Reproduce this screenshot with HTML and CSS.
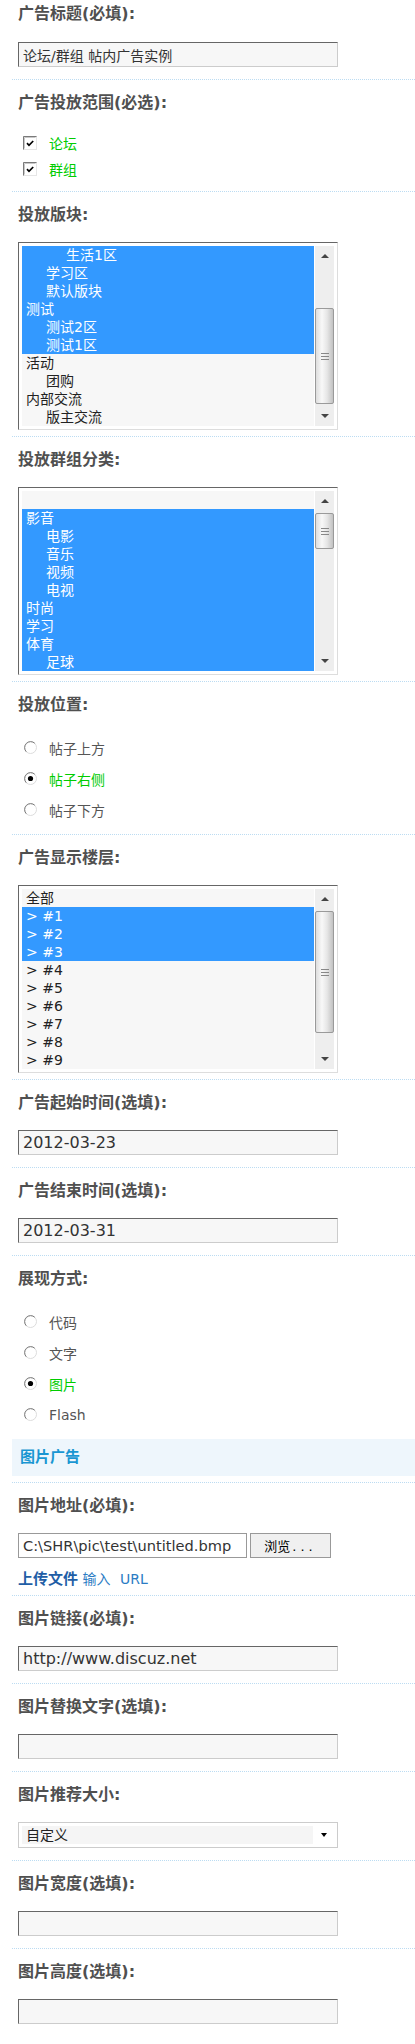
FILE: index.html
```html
<!DOCTYPE html>
<html lang="zh">
<head>
    <meta charset="UTF-8">
    <title>编辑广告</title>
    <link rel="stylesheet" href="styles.css">
</head>
<body>
    <form class="form">
        <div class="row">
            <div class="label">广告标题(必填):</div>
            <input class="text cjk" type="text" value="论坛/群组 帖内广告实例">
        </div>

        <div class="row listrow">
            <div class="label">广告投放范围(必选):</div>
            <ul class="choices checks">
                <li class="on">
                    <svg class="box" width="14" height="14" viewBox="0 0 14 14"><rect x="0" y="0" width="14" height="14" fill="#e6e6e6"/><path d="M0.5 13.5V0.5H13.5" fill="none" stroke="#7a7a7a"/><rect x="1" y="1" width="12" height="12" fill="#fff"/><path d="M1.5 12.5V1.5H12.5" fill="none" stroke="#c8c8c8"/><path d="M4 7.2L6 9.3L10.2 5" fill="none" stroke="#000" stroke-width="1.7"/></svg>
                    论坛
                </li>
                <li class="on">
                    <svg class="box" width="14" height="14" viewBox="0 0 14 14"><rect x="0" y="0" width="14" height="14" fill="#e6e6e6"/><path d="M0.5 13.5V0.5H13.5" fill="none" stroke="#7a7a7a"/><rect x="1" y="1" width="12" height="12" fill="#fff"/><path d="M1.5 12.5V1.5H12.5" fill="none" stroke="#c8c8c8"/><path d="M4 7.2L6 9.3L10.2 5" fill="none" stroke="#000" stroke-width="1.7"/></svg>
                    群组
                </li>
            </ul>
        </div>

        <div class="row boxrow">
            <div class="label">投放版块:</div>
            <div class="listbox">
                <ul class="options">
                    <li class="sel in2">生活1区</li>
                    <li class="sel in1">学习区</li>
                    <li class="sel in1">默认版块</li>
                    <li class="sel">测试</li>
                    <li class="sel in1">测试2区</li>
                    <li class="sel in1">测试1区</li>
                    <li>活动</li>
                    <li class="in1">团购</li>
                    <li>内部交流</li>
                    <li class="in1">版主交流</li>
                </ul>
                <div class="sb">
                    <span class="sb-btn"><i class="arr-up"></i></span>
                    <span class="sb-track"><span class="thumb thumb-a"><i class="grip"></i></span></span>
                    <span class="sb-btn"><i class="arr-down"></i></span>
                </div>
            </div>
        </div>

        <div class="row boxrow">
            <div class="label">投放群组分类:</div>
            <div class="listbox">
                <ul class="options">
                    <li>&nbsp;</li>
                    <li class="sel">影音</li>
                    <li class="sel in1">电影</li>
                    <li class="sel in1">音乐</li>
                    <li class="sel in1">视频</li>
                    <li class="sel in1">电视</li>
                    <li class="sel">时尚</li>
                    <li class="sel">学习</li>
                    <li class="sel">体育</li>
                    <li class="sel in1">足球</li>
                </ul>
                <div class="sb">
                    <span class="sb-btn"><i class="arr-up"></i></span>
                    <span class="sb-track"><span class="thumb thumb-b"><i class="grip"></i></span></span>
                    <span class="sb-btn"><i class="arr-down"></i></span>
                </div>
            </div>
        </div>

        <div class="row listrow">
            <div class="label">投放位置:</div>
            <ul class="choices radios">
                <li>
                    <svg class="radio" width="13" height="13" viewBox="0 0 13 13"><circle cx="6.5" cy="6.5" r="6" fill="#fff" stroke="#dcdcdc"/><path d="M2.26 10.74A6 6 0 0 1 10.74 2.26" fill="none" stroke="#7a7a7a"/></svg>
                    帖子上方
                </li>
                <li class="on">
                    <svg class="radio" width="13" height="13" viewBox="0 0 13 13"><circle cx="6.5" cy="6.5" r="6" fill="#fff" stroke="#dcdcdc"/><path d="M2.26 10.74A6 6 0 0 1 10.74 2.26" fill="none" stroke="#7a7a7a"/><circle cx="6.5" cy="6.5" r="2.6" fill="#000"/></svg>
                    帖子右侧
                </li>
                <li>
                    <svg class="radio" width="13" height="13" viewBox="0 0 13 13"><circle cx="6.5" cy="6.5" r="6" fill="#fff" stroke="#dcdcdc"/><path d="M2.26 10.74A6 6 0 0 1 10.74 2.26" fill="none" stroke="#7a7a7a"/></svg>
                    帖子下方
                </li>
            </ul>
        </div>

        <div class="row boxrow">
            <div class="label">广告显示楼层:</div>
            <div class="listbox">
                <ul class="options latin">
                    <li>全部</li>
                    <li class="sel">&gt; #1</li>
                    <li class="sel">&gt; #2</li>
                    <li class="sel">&gt; #3</li>
                    <li>&gt; #4</li>
                    <li>&gt; #5</li>
                    <li>&gt; #6</li>
                    <li>&gt; #7</li>
                    <li>&gt; #8</li>
                    <li>&gt; #9</li>
                </ul>
                <div class="sb">
                    <span class="sb-btn"><i class="arr-up"></i></span>
                    <span class="sb-track"><span class="thumb thumb-c"><i class="grip"></i></span></span>
                    <span class="sb-btn"><i class="arr-down"></i></span>
                </div>
            </div>
        </div>

        <div class="row">
            <div class="label">广告起始时间(选填):</div>
            <input class="text" type="text" value="2012-03-23">
        </div>

        <div class="row">
            <div class="label">广告结束时间(选填):</div>
            <input class="text" type="text" value="2012-03-31">
        </div>

        <div class="row listrow">
            <div class="label">展现方式:</div>
            <ul class="choices radios">
                <li>
                    <svg class="radio" width="13" height="13" viewBox="0 0 13 13"><circle cx="6.5" cy="6.5" r="6" fill="#fff" stroke="#dcdcdc"/><path d="M2.26 10.74A6 6 0 0 1 10.74 2.26" fill="none" stroke="#7a7a7a"/></svg>
                    代码
                </li>
                <li>
                    <svg class="radio" width="13" height="13" viewBox="0 0 13 13"><circle cx="6.5" cy="6.5" r="6" fill="#fff" stroke="#dcdcdc"/><path d="M2.26 10.74A6 6 0 0 1 10.74 2.26" fill="none" stroke="#7a7a7a"/></svg>
                    文字
                </li>
                <li class="on">
                    <svg class="radio" width="13" height="13" viewBox="0 0 13 13"><circle cx="6.5" cy="6.5" r="6" fill="#fff" stroke="#dcdcdc"/><path d="M2.26 10.74A6 6 0 0 1 10.74 2.26" fill="none" stroke="#7a7a7a"/><circle cx="6.5" cy="6.5" r="2.6" fill="#000"/></svg>
                    图片
                </li>
                <li>
                    <svg class="radio" width="13" height="13" viewBox="0 0 13 13"><circle cx="6.5" cy="6.5" r="6" fill="#fff" stroke="#dcdcdc"/><path d="M2.26 10.74A6 6 0 0 1 10.74 2.26" fill="none" stroke="#7a7a7a"/></svg>
                    Flash
                </li>
            </ul>
        </div>

        <div class="section">图片广告</div>

        <div class="row filerow">
            <div class="label">图片地址(必填):</div>
            <div class="file">
                <input class="file-path" type="text" value="C:\SHR\pic\test\untitled.bmp">
                <button class="browse" type="button">浏览<span class="dots">...</span></button>
            </div>
            <div class="file-links">
                <a class="upload" href="#">上传文件</a>
                <a class="by-url" href="#">输入 URL</a>
            </div>
        </div>

        <div class="row">
            <div class="label">图片链接(必填):</div>
            <input class="text" type="text" value="http://www.discuz.net">
        </div>

        <div class="row">
            <div class="label">图片替换文字(选填):</div>
            <input class="text" type="text" value="">
        </div>

        <div class="row">
            <div class="label">图片推荐大小:</div>
            <div class="dropdown">
                <span class="value">自定义</span>
                <span class="drop-btn"><i class="arr-down black"></i></span>
            </div>
        </div>

        <div class="row">
            <div class="label">图片宽度(选填):</div>
            <input class="text" type="text" value="">
        </div>

        <div class="row">
            <div class="label">图片高度(选填):</div>
            <input class="text" type="text" value="">
        </div>
    </form>
</body>
</html>
```

FILE: styles.css
```css
body {
    margin: 0;
    font-family: "DejaVu Sans", "Noto Sans CJK SC", sans-serif;
    font-size: 14px;
    color: #333;
    background: #fff;
}
.form {
    margin: 0 0 0 12px;
}
.row {
    border-top: 1px dotted #bcdcf2;
    padding: 13px 0 12px 6px;
}
.row:first-child {
    border-top: 0;
    padding-top: 4px;
}
.row:first-child .label {
    margin-bottom: 18px;
}
.row:last-child {
    padding-bottom: 7px;
}
.listrow {
    padding-bottom: 9px;
}
.boxrow {
    padding-bottom: 6px;
}
.filerow {
    padding-bottom: 6px;
}
.label {
    font-size: 16px;
    font-weight: bold;
    line-height: 20px;
    color: #505050;
    margin-bottom: 17px;
}

/* text inputs */
.text {
    display: block;
    width: 320px;
    height: 25px;
    box-sizing: border-box;
    margin: 0;
    padding: 0 4px;
    border: 1px solid;
    border-color: #666 #ccc #ccc #666;
    background: #f7f7f7;
    font-family: "DejaVu Sans", "Noto Sans CJK SC", sans-serif;
    font-size: 16px;
    color: #333;
}
.text.cjk {
    font-size: 14px;
}

/* checkboxes and radios */
.choices {
    list-style: none;
    margin: 2px 0 0;
    padding: 0;
}
.choices li {
    display: flex;
    align-items: center;
    gap: 12px;
    height: 26px;
    padding-left: 5px;
    font-size: 14px;
    color: #555;
}
.choices .on {
    color: #00cc00;
}
.radios {
    margin-top: 4px;
}
.radios li {
    height: 31px;
    padding-left: 6px;
}
.box, .radio {
    display: block;
    flex: none;
}

/* multi select boxes */
.listbox {
    display: flex;
    width: 320px;
    height: 188px;
    box-sizing: border-box;
    padding: 3px;
    border: 1px solid;
    border-color: #666 #ddd #ddd #666;
    background: #fff;
}
.options {
    flex: 1;
    margin: 0;
    padding: 0;
    list-style: none;
    background: #f7f7f7;
    overflow: hidden;
}
.options li {
    height: 18px;
    line-height: 18px;
    padding-left: 4px;
    white-space: nowrap;
    color: #222;
}
.options .in1 {
    padding-left: 24px;
}
.options .in2 {
    padding-left: 44px;
}
.options .sel {
    background: #3399ff;
    color: #fff;
}
.sb {
    display: flex;
    flex-direction: column;
    width: 19px;
    margin-left: 1px;
    background: #eee;
}
.sb-btn {
    display: flex;
    align-items: center;
    justify-content: center;
    height: 20px;
}
.sb-track {
    flex: 1;
}
.arr-up {
    border-left: 4px solid transparent;
    border-right: 4px solid transparent;
    border-bottom: 4px solid #444;
}
.arr-down {
    border-left: 4px solid transparent;
    border-right: 4px solid transparent;
    border-top: 4px solid #444;
}
.thumb {
    display: flex;
    align-items: center;
    justify-content: center;
    box-sizing: border-box;
    border: 1px solid #9a9a9a;
    border-radius: 2px;
    background: linear-gradient(to right, #dedede, #f8f8f8 35%, #e6e6e6 65%, #c2c2c2);
}
.thumb-a {
    margin-top: 42px;
    height: 96px;
}
.thumb-b {
    margin-top: 2px;
    height: 36px;
}
.thumb-c {
    margin-top: 2px;
    height: 122px;
}
.grip {
    width: 8px;
    height: 5px;
    border-top: 1px solid #888;
    border-bottom: 1px solid #888;
    background: linear-gradient(#888, #888) center / 100% 1px no-repeat;
}

/* section header */
.section {
    height: 37px;
    line-height: 37px;
    padding-left: 8px;
    margin-bottom: 6px;
    background: #eef6fc;
    font-size: 15px;
    font-weight: bold;
    color: #1a96d2;
}

/* file field */
.file {
    display: flex;
    gap: 3px;
    margin-top: 1px;
}
.file-path {
    width: 229px;
    height: 25px;
    box-sizing: border-box;
    margin: 0;
    padding: 0 4px;
    border: 1px solid #999;
    background: #fff;
    font-family: "DejaVu Sans", "Noto Sans CJK SC", sans-serif;
    font-size: 14.6px;
    color: #333;
}
.browse {
    width: 81px;
    height: 25px;
    margin: 0;
    padding: 0;
    border: 1px solid #999;
    background: #f0f0f0;
    font-family: "DejaVu Sans", "Noto Sans CJK SC", sans-serif;
    font-size: 13px;
    color: #000;
}
.browse .dots {
    margin-left: 2px;
    letter-spacing: 4px;
}
.file-links {
    margin-top: 11px;
    line-height: 20px;
    font-size: 14px;
}
.file-links a {
    text-decoration: none;
}
.upload {
    font-size: 15px;
    font-weight: bold;
    color: #1f5ea6;
}
.by-url {
    color: #2b7cc4;
    word-spacing: 5px;
}

/* single select */
.dropdown {
    display: flex;
    width: 320px;
    height: 26px;
    box-sizing: border-box;
    padding: 3px;
    border: 1px solid #ccc;
    background: #fff;
}
.dropdown .value {
    flex: 1;
    padding-left: 4px;
    line-height: 18px;
    background: #f5f5f5;
    color: #222;
}
.drop-btn {
    display: flex;
    align-items: center;
    justify-content: center;
    width: 20px;
    margin-left: 1px;
}
.arr-down.black {
    border-left-width: 3px;
    border-right-width: 3px;
    border-top-color: #000;
}
```
